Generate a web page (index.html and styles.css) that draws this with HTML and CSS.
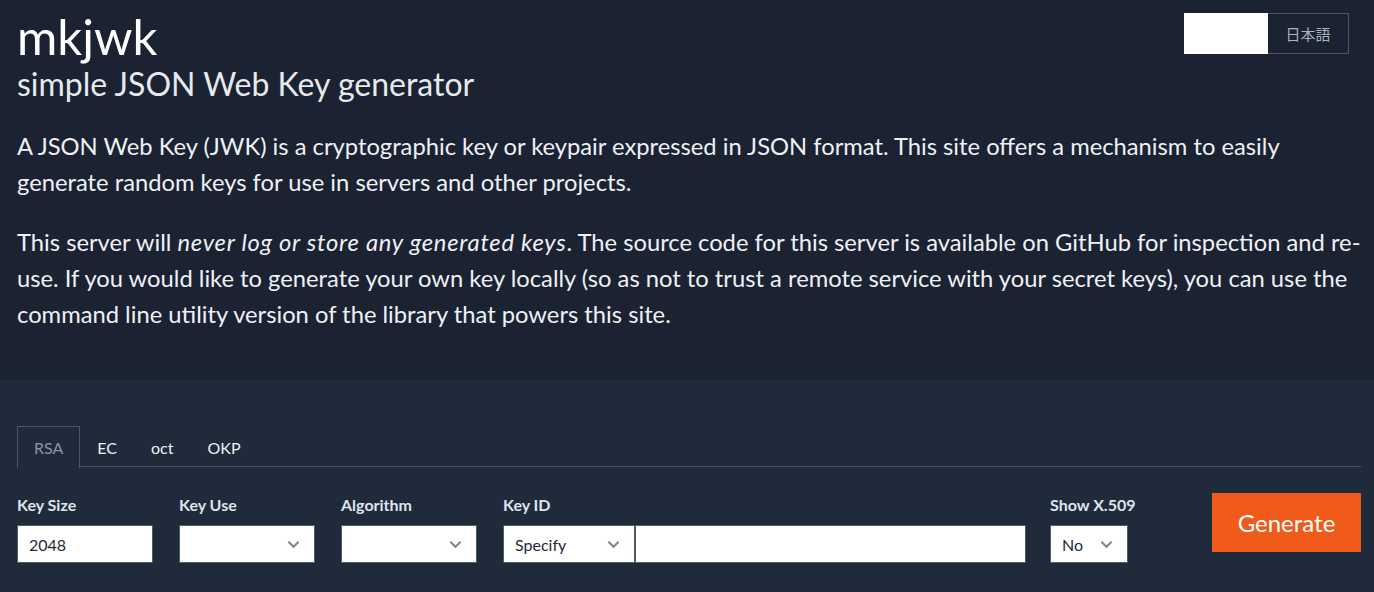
FILE: index.html
```html
<!DOCTYPE html>
<html lang="en">
<head>
<meta charset="utf-8">
<title>mkjwk</title>
<link rel="stylesheet" href="styles.css">
</head>
<body>
<header class="hero">
  <div class="lang">
    <span class="lang-blank"></span>
    <span class="lang-btn">日本語</span>
  </div>
  <h1 class="title">mkjwk</h1>
  <h2 class="subtitle">simple JSON Web Key generator</h2>
  <p class="lead">A JSON Web Key (JWK) is a cryptographic key or keypair expressed in JSON format. This site offers a mechanism to easily generate random keys for use in servers and other projects.</p>
  <p class="lead">This server will <em>never log or store any generated keys</em>. The source code for this server is available on GitHub for inspection and re-use. If you would like to generate your own key locally (so as not to trust a remote service with your secret keys), you can use the command line utility version of the library that powers this site.</p>
</header>
<main class="panel">
  <nav class="tabs">
    <span class="tab active">RSA</span>
    <span class="tab">EC</span>
    <span class="tab">oct</span>
    <span class="tab">OKP</span>
  </nav>
  <div class="form">
    <div class="field w136">
      <label class="label">Key Size</label>
      <div class="input">2048</div>
    </div>
    <div class="field w136">
      <label class="label">Key Use</label>
      <div class="input select"><span></span><svg class="chev" viewBox="0 0 14 9"><path d="M1.5 1.5 7 7l5.5-5.5" fill="none" stroke="currentColor" stroke-width="2.2"/></svg></div>
    </div>
    <div class="field w136">
      <label class="label">Algorithm</label>
      <div class="input select"><span></span><svg class="chev" viewBox="0 0 14 9"><path d="M1.5 1.5 7 7l5.5-5.5" fill="none" stroke="currentColor" stroke-width="2.2"/></svg></div>
    </div>
    <div class="field wkid">
      <label class="label">Key ID</label>
      <div class="group">
        <div class="input select kidsel"><span>Specify</span><svg class="chev" viewBox="0 0 14 9"><path d="M1.5 1.5 7 7l5.5-5.5" fill="none" stroke="currentColor" stroke-width="2.2"/></svg></div>
        <div class="input kidtext"></div>
      </div>
    </div>
    <div class="field wx509">
      <label class="label">Show X.509</label>
      <div class="input select"><span>No</span><svg class="chev" viewBox="0 0 14 9"><path d="M1.5 1.5 7 7l5.5-5.5" fill="none" stroke="currentColor" stroke-width="2.2"/></svg></div>
    </div>
    <div class="actions">
      <button class="generate">Generate</button>
    </div>
  </div>
</main>
</body>
</html>
```
FILE: styles.css
```css
html, body {
  margin: 0;
  padding: 0;
}
body {
  font-family: Lato, "Noto Sans CJK JP", sans-serif;
  color: #eef1f5;
  background: #1f2b3b;
  height: 592px;
  overflow: hidden;
}
.hero {
  background: #1b2231;
  padding: 8px 8px 48px 17px;
  position: relative;
}
.lang {
  position: absolute;
  top: 13px;
  right: 25px;
  display: flex;
}
.lang-blank {
  width: 84px;
  height: 41px;
  background: #ffffff;
}
.lang-btn {
  width: 80px;
  height: 39px;
  border: 1px solid #4b5668;
  border-left: none;
  display: flex;
  align-items: center;
  justify-content: center;
  font-size: 15px;
  color: #aab2be;
  font-family: "Noto Sans CJK JP", sans-serif;
}
.title {
  margin: 0;
  font-size: 49px;
  font-weight: 400;
  line-height: 56px;
  color: #ffffff;
}
.subtitle {
  margin: 0;
  font-size: 32px;
  font-weight: 400;
  line-height: 40px;
  color: #e6e9ee;
}
.lead {
  margin: 24px 0 0;
  font-size: 23.75px;
  line-height: 36px;
  color: #eef1f5;
}
.lead em {
  font-style: italic;
  letter-spacing: 0.75px;
}
.panel {
  padding: 46px 13px 0 17px;
}
.tabs {
  display: flex;
  border-bottom: 1px solid #4a5568;
  height: 40px;
}
.tab {
  padding: 0 16px;
  display: flex;
  align-items: center;
  font-size: 16px;
  color: #eef1f5;
  border: 1px solid transparent;
  border-bottom: none;
  margin-bottom: -1px;
}
.tab.active {
  border-color: #4a5568;
  background: #1f2b3b;
  color: #8a94a4;
  height: 41px;
}
.form {
  display: flex;
  align-items: flex-start;
  margin-top: 24px;
}
.field {
  display: flex;
  flex-direction: column;
  margin-right: 26px;
}
.w136 { width: 136px; }
.wkid { width: 523px; margin-right: 24px; }
.wx509 { width: 78px; margin-right: 0; }
.label {
  font-size: 16px;
  font-weight: 700;
  color: #dfe4ec;
  line-height: 24px;
  margin-top: 2px;
  margin-bottom: 8px;
  white-space: nowrap;
}
.input {
  box-sizing: border-box;
  height: 38px;
  background: #ffffff;
  border: 1px solid #4f5b6d;
  color: #222a36;
  font-size: 16px;
  padding: 0 11px;
  display: flex;
  align-items: center;
}
.select {
  justify-content: space-between;
}
.chev {
  width: 13px;
  height: 9px;
  color: #7b8595;
  margin-right: 3px;
}
.group {
  display: flex;
}
.kidsel {
  width: 131px;
  flex: none;
  border-right: none;
}
.kidtext {
  flex: 1;
  border-left: 2px solid #4f5b6d;
}
.actions {
  margin-left: auto;
}
.generate {
  width: 149px;
  height: 59px;
  background: #f05a1a;
  border: none;
  color: #ffffff;
  font-family: Lato, sans-serif;
  font-size: 24px;
  padding: 0;
  margin-top: 2px;
}
```
